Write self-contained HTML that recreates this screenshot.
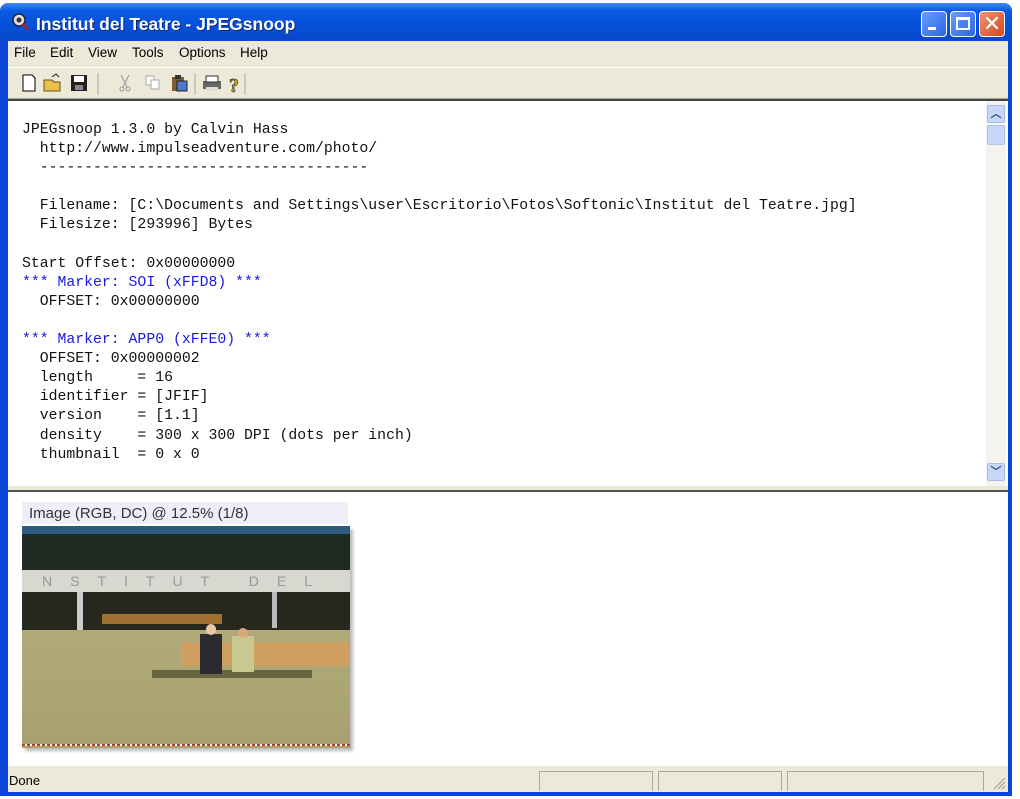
<!DOCTYPE html>
<html><head><meta charset="utf-8"><style>
*{margin:0;padding:0;box-sizing:border-box}
body{width:1020px;height:799px;background:#fff;position:relative;overflow:hidden;font-family:"Liberation Sans",sans-serif}
.win{position:absolute;left:0;top:3px;width:1012px;height:793px;background:#0a46d8;border-radius:8px 8px 0 0}
.title{position:absolute;left:0;top:0;width:1012px;height:38px;border-radius:8px 8px 0 0;background:linear-gradient(#3d8cf5,#0a5ae4 20%,#0550d8 60%,#0a48c8)}
.title span{position:absolute;left:36px;top:11px;color:#fff;font-weight:bold;font-size:17.5px;text-shadow:1px 1px #0a2a80}
.ico{position:absolute;left:10px;top:10px;width:20px;height:18px}
.btn{position:absolute;top:8px;width:26px;height:26px;border:1px solid #fff;border-radius:4px;background:linear-gradient(135deg,#6a9cf8,#2c66e8)}
.menu{position:absolute;left:8px;top:38px;width:1000px;height:26px;background:#ece9d8;font-size:13.5px;color:#000}
.menu span{position:absolute;top:4px}
.tb{position:absolute;left:8px;top:64px;width:1000px;height:32px;background:#ece9d8;border-top:1px solid #fff;border-bottom:1px solid #aca899}
.edit{position:absolute;left:8px;top:96px;width:1000px;height:387px;background:#fff;border-top:2px solid #444}
pre{position:absolute;left:14px;top:20px;font-family:"Liberation Mono",monospace;font-size:14.8px;line-height:19.1px;color:#111}
.b{color:#1a1ae0}
.sb{position:absolute;left:978px;top:0;width:20px;height:385px;background:#f4f3ee}
.sbb{position:absolute;left:1px;width:18px;height:18px;background:#c8d6f8;border:1px solid #a8bcec;border-radius:2px;font-size:11px;color:#3a4e88;text-align:center;line-height:16px;font-weight:bold}
.split{position:absolute;left:8px;top:483px;width:1000px;height:6px;background:#ece9d8;border-bottom:2px solid #555}
.bot{position:absolute;left:8px;top:489px;width:1000px;height:274px;background:#fff}
.cap{position:absolute;left:14px;top:10px;width:326px;height:22px;background:#eeeef8;font-size:15px;color:#333;padding:3px 0 0 7px}
.img{position:absolute;left:14px;top:34px;width:328px;height:222px;box-shadow:3px 3px 3px #bbb;overflow:hidden;background:#a8a36e}
.status{position:absolute;left:8px;top:763px;width:1000px;height:26px;background:#ece9d8;font-size:13px}
.pane{position:absolute;top:5px;height:20px;border:1px solid #aca899;border-bottom:none}
</style></head><body>
<div class="win">
<div class="title">
<svg class="ico" viewBox="0 0 20 18"><circle cx="9" cy="7" r="6" fill="#ddd" stroke="#224" stroke-width="1.5"/><circle cx="9" cy="7" r="2.5" fill="#333"/><path d="M13 11l5 5" stroke="#a22" stroke-width="3"/></svg>
<span>Institut del Teatre - JPEGsnoop</span>
<div class="btn" style="left:921px"><div style="position:absolute;left:6px;top:15px;width:8px;height:3px;background:#fff"></div></div>
<div class="btn" style="left:950px"><div style="position:absolute;left:5px;top:5px;width:14px;height:13px;border:2px solid #fff;border-top-width:3px"></div></div>
<div class="btn" style="left:979px;background:linear-gradient(135deg,#f09070,#d84820);color:#fff;font-size:22px;text-align:center;line-height:24px">✕</div>
</div>
<div class="menu"><span style="left:6px">File</span><span style="left:42px">Edit</span><span style="left:80px">View</span><span style="left:124px">Tools</span><span style="left:171px">Options</span><span style="left:232px">Help</span></div>
<div class="tb">
<svg width="260" height="30" viewBox="0 0 260 30" style="position:absolute;left:2px;top:0">
<path d="M13 7h9l3 3v13H13z" fill="#fff" stroke="#000"/>
<path d="M34 12h8l2 2h6v9H34z" fill="#e8c050" stroke="#6a5010"/><path d="M42 9l4-3 3 3" stroke="#222" fill="none"/>
<rect x="61" y="7" width="16" height="16" fill="#222"/><rect x="64" y="8" width="10" height="6" fill="#fff"/><rect x="65" y="17" width="8" height="5" fill="#888"/>
<line x1="88" y1="5" x2="88" y2="27" stroke="#aca899"/>
<path d="M111 7l6 12M119 7l-6 12" stroke="#999"/><circle cx="112" cy="21" r="2" fill="none" stroke="#999"/><circle cx="118" cy="21" r="2" fill="none" stroke="#999"/>
<rect x="136" y="8" width="8" height="9" fill="#fff" stroke="#aaa"/><rect x="141" y="12" width="8" height="9" fill="#fff" stroke="#aaa"/>
<rect x="162" y="9" width="12" height="14" fill="#7a6030"/><rect x="167" y="13" width="10" height="10" fill="#4a7ac8" stroke="#223"/><rect x="165" y="7" width="6" height="4" fill="#333"/>
<line x1="185" y1="5" x2="185" y2="27" stroke="#aca899"/>
<rect x="193" y="13" width="18" height="8" fill="#666"/><rect x="196" y="8" width="12" height="6" fill="#fff" stroke="#333"/><rect x="196" y="19" width="12" height="4" fill="#ddd"/>
<text x="219" y="24" font-size="20" font-weight="bold" fill="#d8b000" stroke="#333" stroke-width=".7" font-family="Liberation Serif">?</text>
<line x1="235" y1="5" x2="235" y2="27" stroke="#aca899"/>
</svg>
</div>
<div class="edit">
<pre>JPEGsnoop 1.3.0 by Calvin Hass
  http://www.impulseadventure.com/photo/
  -------------------------------------

  Filename: [C:\Documents and Settings\user\Escritorio\Fotos\Softonic\Institut del Teatre.jpg]
  Filesize: [293996] Bytes

Start Offset: 0x00000000
<span class="b">*** Marker: SOI (xFFD8) ***</span>
  OFFSET: 0x00000000

<span class="b">*** Marker: APP0 (xFFE0) ***</span>
  OFFSET: 0x00000002
  length     = 16
  identifier = [JFIF]
  version    = [1.1]
  density    = 300 x 300 DPI (dots per inch)
  thumbnail  = 0 x 0</pre>
<div class="sb"><div class="sbb" style="top:4px">︿</div><div style="position:absolute;left:1px;top:24px;width:18px;height:20px;background:#c8d6f8;border:1px solid #b0c4f0;border-radius:2px"></div><div class="sbb" style="top:362px">﹀</div></div>
</div>
<div class="split"></div>
<div class="bot">
<div class="cap">Image (RGB, DC) @ 12.5% (1/8)</div>
<div class="img">
<div style="position:absolute;left:0;top:0;width:328px;height:10px;background:#2e5a80"></div>
<div style="position:absolute;left:0;top:8px;width:328px;height:36px;background:#1e2a22"></div>
<div style="position:absolute;left:0;top:44px;width:328px;height:22px;background:#d8d8d0;color:#999;font-size:14px;letter-spacing:18px;padding:3px 0 0 20px;white-space:nowrap">NSTITUT DEL TEATRE</div>
<div style="position:absolute;left:0;top:66px;width:328px;height:38px;background:#26281e"></div>
<div style="position:absolute;left:55px;top:66px;width:6px;height:38px;background:#ccc"></div>
<div style="position:absolute;left:250px;top:66px;width:5px;height:36px;background:#bbb"></div>
<div style="position:absolute;left:80px;top:88px;width:120px;height:10px;background:#a07030"></div>
<div style="position:absolute;left:0;top:104px;width:328px;height:114px;background:linear-gradient(#b0aa78,#a8a070)"></div>
<div style="position:absolute;left:130px;top:144px;width:160px;height:8px;background:#3a3820;opacity:.6"></div>
<div style="position:absolute;left:160px;top:116px;width:168px;height:24px;background:#d0a060"></div>
<div style="position:absolute;left:178px;top:108px;width:22px;height:40px;background:#2a2a30"></div>
<div style="position:absolute;left:184px;top:98px;width:10px;height:11px;background:#e8c8a8;border-radius:5px"></div>
<div style="position:absolute;left:210px;top:110px;width:22px;height:36px;background:#c8c890"></div>
<div style="position:absolute;left:216px;top:102px;width:10px;height:10px;background:#d8a878;border-radius:5px"></div>
<div style="position:absolute;left:0;top:218px;width:328px;height:2px;background:repeating-linear-gradient(90deg,#b04020 0 3px,#fff 3px 5px)"></div>
</div>
</div>
<div class="status"><span style="position:absolute;left:1px;top:7px">Done</span>
<div class="pane" style="left:531px;width:114px"></div><div class="pane" style="left:650px;width:124px"></div><div class="pane" style="left:779px;width:197px"></div>
<svg width="14" height="14" style="position:absolute;right:2px;bottom:2px"><path d="M13 2L2 13M13 6L6 13M13 10L10 13" stroke="#999"/></svg>
</div>
</div>
</body></html>
